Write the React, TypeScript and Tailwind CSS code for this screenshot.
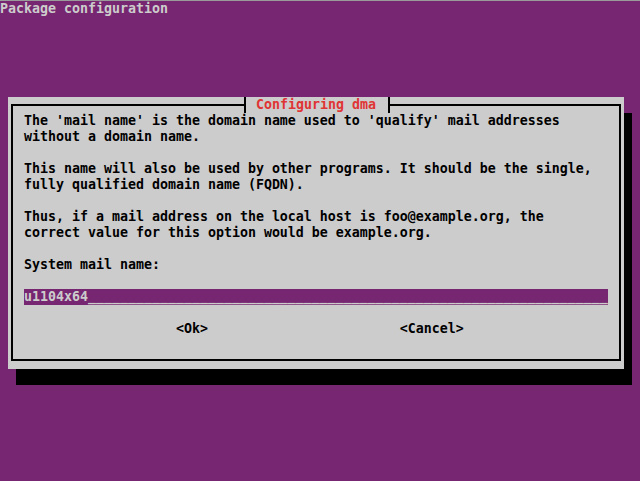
import React from 'react';

const mono = { fontFamily: '"DejaVu Sans Mono", "Liberation Mono", monospace' };

const lines: string[] = [
  "The 'mail name' is the domain name used to 'qualify' mail addresses",
  'without a domain name.',
  '',
  'This name will also be used by other programs. It should be the single,',
  'fully qualified domain name (FQDN).',
  '',
  'Thus, if a mail address on the local host is foo@example.org, the',
  'correct value for this option would be example.org.',
  '',
  'System mail name:',
  '',
];

const App: React.FC = () => {
  const value = 'u1104x64';
  const filler = '_'.repeat(73 - value.length);

  return (
    <div
      className="w-[640px] h-[481px] overflow-hidden bg-[#772671] border-t border-[#9a9a9a] text-[13.29px] leading-4 font-bold"
      style={mono}
    >
      {/* top title */}
      <div className="h-4 whitespace-pre text-[#cccccc]">Package configuration</div>

      {/* dialog */}
      <div className="relative mt-[80px] ml-2 w-[616px] h-[272px] bg-[#cccccc] px-[3px] pt-[7px] pb-[8px] shadow-[8px_16px_0_0_#000]">
        <div className="h-full border-2 border-black pl-[11px] pt-[7px] text-black">
          {lines.map((line, i) => (
            <div key={i} className="h-4 whitespace-pre">
              {line}
            </div>
          ))}

          {/* input */}
          <div className="w-[584px] h-4 bg-[#772671] text-[#cccccc] whitespace-pre">
            {value}
            {filler}
          </div>

          <div className="h-4" />

          {/* buttons */}
          <div className="h-4 whitespace-pre">{'                   <Ok>                        <Cancel>'}</div>
        </div>

        {/* dialog title */}
        <div className="absolute top-0 left-[236px] w-[146px] h-4 bg-[#cccccc] border-x-2 border-black pl-[10px] whitespace-pre text-[#e03434]">
          Configuring dma
        </div>
      </div>
    </div>
  );
};

export default App;
